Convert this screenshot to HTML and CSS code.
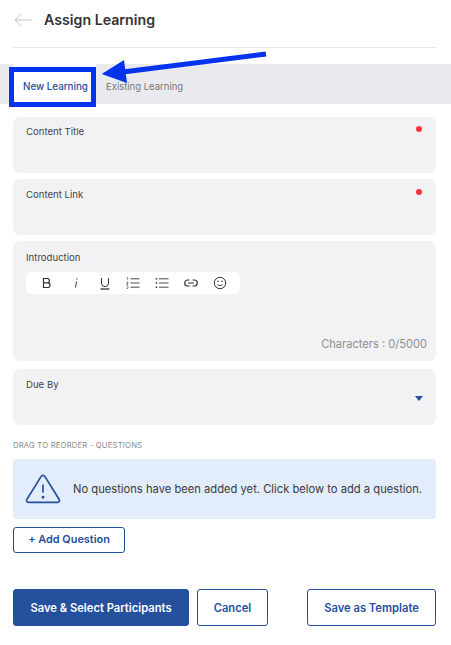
FILE: index.html
```html
<!DOCTYPE html>
<html lang="en">
<head>
<meta charset="utf-8">
<title>Assign Learning</title>
<link rel="stylesheet" href="styles.css">
</head>
<body>
<div class="page">
  <header class="header">
    <svg class="back" width="18" height="14" viewBox="0 0 18 14" fill="none" stroke="#c4c4c4" stroke-width="1"><path d="M17.500 7H1M7.500 .8 1 7l6.500 6.200"/></svg>
    <h1 class="title">Assign Learning</h1>
  </header>
  <nav class="tabs">
    <div class="tab tab-active">New Learning</div>
    <div class="tab">Existing Learning</div>
  </nav>
  <form class="form">
    <div class="field field-short">
      <span class="label">Content Title</span><i class="req"></i>
    </div>
    <div class="field field-short field-link">
      <span class="label">Content Link</span><i class="req"></i>
    </div>
    <div class="field field-editor">
      <span class="label">Introduction</span>
      <div class="toolbar">
        <svg class="tool" width="16" height="16" viewBox="0 0 16 16" fill="none" stroke="#333" stroke-width="1.200"><path d="M4.500 3.500h3.700a2.200 2.200 0 0 1 0 4.400H4.500zM4.500 7.900h4.300a2.300 2.300 0 0 1 0 4.600H4.500z"/></svg>
        <svg class="tool" width="16" height="16" viewBox="0 0 16 16" fill="none" stroke="#333" stroke-width="1"><path d="M8.500 6.500 7.500 12.500"/><path d="M8.800 3.500v1" stroke-width="1.300"/></svg>
        <svg class="tool" width="16" height="16" viewBox="0 0 16 16" fill="none" stroke="#333" stroke-width="1"><path d="M4.500 3v5.200a3.500 3.500 0 0 0 7 0V3"/><path d="M3.500 14h9" stroke-width="1.300"/></svg>
        <svg class="tool" width="16" height="16" viewBox="0 0 16 16" fill="none" stroke="#333" stroke-width=".9"><path d="M5.500 3.800h9M5.500 8h9M5.500 12.200h9"/><path d="M1.800 2.500h.9v2.600M1.600 7h1.300v1.200H1.700v1.200H3M1.600 11h1.400v2.400H1.600" stroke-width=".6"/></svg>
        <svg class="tool" width="16" height="16" viewBox="0 0 16 16" fill="none" stroke="#333" stroke-width=".9"><path d="M5 3.800h9.500M5 8h9.500M5 12.200h9.500"/><path d="M1.700 3.800h1.500M1.700 8h1.500M1.700 12.200h1.500" stroke-width="1.400"/></svg>
        <svg class="tool" width="16" height="16" viewBox="0 0 16 16" fill="none" stroke="#333" stroke-width="1.200"><path d="M6.500 5H4.700a3 3 0 0 0 0 6h1.800M9.500 5h1.800a3 3 0 0 1 0 6H9.500M5 8h6"/></svg>
        <svg class="tool" width="16" height="16" viewBox="0 0 16 16" fill="none" stroke="#333" stroke-width="1"><circle cx="8" cy="8" r="5.700"/><path d="M5.400 9.400c1.200 1.700 4 1.700 5.200 0"/><path d="M6 5.800v1.200M10 5.800v1.200" stroke-width="1.300"/></svg>
      </div>
      <div class="counter">Characters : 0/5000</div>
    </div>
    <div class="field field-short field-due">
      <span class="label">Due By</span>
      <i class="caret"></i>
    </div>
  </form>
  <div class="section-label">DRAG TO REORDER - QUESTIONS</div>
  <div class="notice">
    <svg class="warn" width="36" height="30" viewBox="0 0 36 30" fill="none" stroke="#24509e" stroke-width="1.700" stroke-linejoin="round"><path d="M16 2.600 1.800 25.500a1.800 1.800 0 0 0 1.500 2.800h29.400a1.800 1.800 0 0 0 1.500-2.800L20 2.600a2.300 2.300 0 0 0-4 0z"/><path d="M18 10.500v8"/><circle cx="18" cy="23.300" r=".6" fill="#24509e"/></svg>
    <span class="notice-text">No questions have been added yet. Click below to add a question.</span>
  </div>
  <button type="button" class="btn btn-add">+ Add Question</button>
  <div class="actions">
    <button type="button" class="btn btn-primary">Save &amp; Select Participants</button>
    <button type="button" class="btn btn-cancel">Cancel</button>
    <button type="button" class="btn btn-template">Save as Template</button>
  </div>
</div>
<div class="callout"></div>
<svg class="arrow" width="180" height="50" viewBox="0 0 180 50"><path d="M165 5 22 23" stroke="#0433ee" stroke-width="5" fill="none"/><path d="M.7 25 23 11 26 34z" fill="#0433ee"/></svg>
</body>
</html>
```
FILE: styles.css
```css
* { box-sizing: border-box; }
html, body { margin: 0; padding: 0; background: #fff; }
body {
  position: relative;
  width: 451px;
  height: 645px;
  overflow: hidden;
  font-family: Inter, "Liberation Sans", sans-serif;
  color: #333;
}
.header {
  display: flex;
  align-items: center;
  gap: 12px;
  height: 48px;
  margin: 0 15px 0 13px;
  padding: 0 0 8px 1px;
  border-bottom: 1px solid #e5e5e5;
}
.back { flex: none; }
.title { margin: 0; font-size: 14.200px; font-weight: 600; color: #333; }
.tabs {
  display: flex;
  height: 40px;
  margin-top: 16px;
  background: #e9eaee;
}
.tab {
  display: flex;
  align-items: center;
  height: 40px;
  padding: 5px 10px 0;
  font-size: 9.500px;
  color: #777;
  white-space: nowrap;
}
.tab-active {
  width: 83px;
  margin-left: 13px;
  background: #fff;
  color: #24509e;
  font-size: 9.800px;
  font-weight: 500;
  padding-left: 10px;
}
.form {
  display: flex;
  flex-direction: column;
  gap: 6px;
  margin: 13px 15px 0 13px;
}
.field {
  position: relative;
  background: #f2f2f4;
  border-radius: 7px;
  padding: 9px 13px 0;
}
.field-short { height: 56px; }
.field-link { padding-top: 10px; }
.field-link .req { top: 10px; }
.field-editor { height: 120px; padding-top: 11px; }
.field-due { margin-top: 2px; padding-top: 10px; }
.label { display: block; font-size: 9.600px; line-height: 12px; color: #444; }
.req {
  position: absolute;
  top: 9px;
  right: 14px;
  width: 6px;
  height: 6px;
  border-radius: 50%;
  background: #fb3640;
}
.toolbar {
  display: flex;
  align-items: center;
  gap: 12.800px;
  width: 214px;
  height: 22px;
  margin-top: 8px;
  padding-left: 13px;
  background: #fff;
  border-radius: 5px;
}
.tool { flex: none; }
.counter {
  position: absolute;
  right: 9px;
  bottom: 10px;
  font-size: 11.100px;
  color: #8f8f8f;
}
.caret {
  position: absolute;
  right: 13px;
  top: 27px;
  width: 0;
  height: 0;
  border-left: 4px solid transparent;
  border-right: 4px solid transparent;
  border-top: 5px solid #24509e;
}
.section-label {
  margin: 16px 0 0 13px;
  font-size: 7.700px;
  line-height: 10px;
  letter-spacing: .18px;
  color: #8a8a8a;
}
.notice {
  display: flex;
  align-items: center;
  gap: 12px;
  height: 60px;
  margin: 8px 15px 0 13px;
  padding-left: 12px;
  background: #e2ecfb;
  border-radius: 4px;
}
.warn { flex: none; }
.notice-text { font-size: 11.200px; color: #3a3a3a; white-space: nowrap; }
.btn {
  font-family: inherit;
  font-weight: 600;
  color: #24509e;
  background: #fff;
  border: 1px solid #24509e;
  border-radius: 3px;
  padding: 0;
}
.btn-add {
  display: block;
  width: 112px;
  height: 26px;
  margin: 8px 0 0 13px;
  padding-bottom: 2px;
  font-size: 10.900px;
}
.actions {
  display: flex;
  margin: 36px 15px 0 13px;
  gap: 8px;
}
.actions .btn { height: 37px; font-size: 11.200px; }
.btn-primary { width: 176px; background: #24509e; color: #fff; }
.btn-cancel { width: 71px; }
.btn-template { width: 129px; margin-left: 31px; }
.callout {
  position: absolute;
  left: 9px;
  top: 67px;
  width: 87px;
  height: 40px;
  border: 5px solid #0433ee;
}
.arrow { position: absolute; left: 101px; top: 49px; }
```
